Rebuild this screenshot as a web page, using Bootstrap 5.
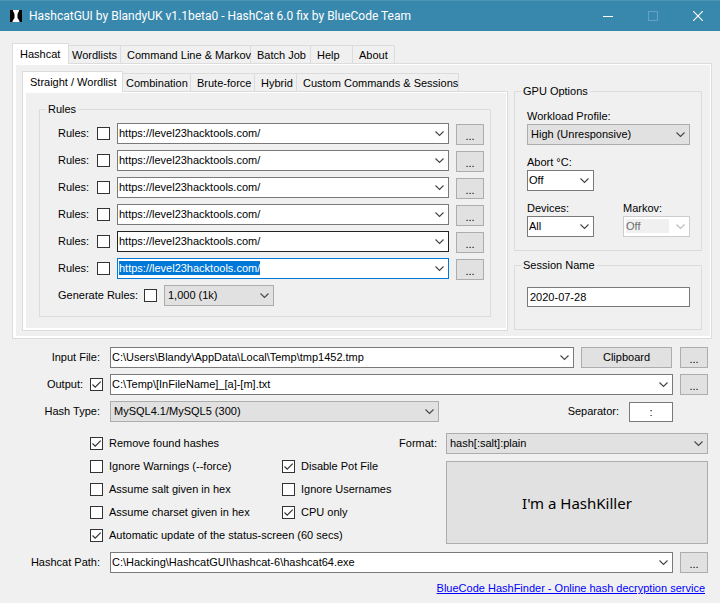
<!DOCTYPE html>
<html lang="en">
<head>
<meta charset="utf-8">
<meta name="viewport" content="width=device-width, initial-scale=1">
<title>HashcatGUI</title>
<link href="https://cdn.jsdelivr.net/npm/bootstrap@5.3.0/dist/css/bootstrap.min.css" rel="stylesheet">
<style>
:root { --face: #f0f0f0; --line: #dcdcdc; --btn: #e1e1e1; --btn-line: #adadad; --box-line: #7a7a7a; }
body { background: var(--face); color: #000; font: 11px/15px "Liberation Sans", Arial, sans-serif; }
.titlebar { background: #3888ad; color: #fff; height: 31px; padding-left: 9px; border-top: 1px solid #4a94b5; font: 12px/16px Roboto, sans-serif; }
.titlebar span { margin-left: 6px; }
.titlebar button { width: 45px; height: 30px; border: 0; background: none; color: #fff; padding: 0; display: flex; align-items: center; justify-content: center; }
.titlebar button:disabled { color: #66a6c4; }
.workspace { padding: 12px 8px 0 12px; }
.lower { padding: 8px 12px 0 22px; }
.tabs .nav-link { color: #000; background: var(--face); border: 1px solid var(--line); border-left: 0; border-bottom: 0; border-radius: 0; height: 18px; padding: 0 0 0 3px; line-height: 19px; text-align: left; white-space: nowrap; margin: 0; }
.tabs .nav-link.active { background: #fff; border: 1px solid var(--line); border-bottom: 0; height: 21px; padding-left: 7px; line-height: 18px; margin-bottom: -1px; position: relative; color: #000; }
.tabs .nav-link.pad-l { padding-left: 6px; }
.w-a { width: 42px; } .w-b { width: 52px; } .w-c { width: 57px; } .w-d { width: 60px; } .w-e { width: 64px; } .w-f { width: 68px; } .w-g { width: 101px; } .w-h { width: 130px; } .w-i { width: 162px; }
.sheet { background: #fff; border: 1px solid var(--line); padding: 1px 1px 2px 3px; }
.sheet-body { background: var(--face); }
.outer-body { padding: 6px 8px 5px 6px; gap: 6px; }
.inner-body { padding: 9px 15px 11px 13px; }
.side { width: 188px; padding-top: 13px; gap: 7px; }
.group { border: 1px solid var(--line); }
.group > legend { float: none; width: auto; font-size: 11px; line-height: 15px; margin: 0 0 0 6px; padding: 0 2px; }
.rules-box { padding: 6px 6px 10px 18px; }
.gpu-box { padding: 10px 11px 13px 12px; }
.session-box { padding: 14px 11px 22px 12px; }
.stack { display: flex; flex-direction: column; gap: 6px; }
.rule { display: flex; align-items: center; gap: 7px; }
.rule > label { width: 31px; margin-right: 1px; white-space: nowrap; }
.rule > .long { width: 78px; }
.combo { display: flex; height: 21px; background: #fff; border: 1px solid var(--box-line); min-width: 0; }
.combo input { flex: 1; min-width: 0; width: 0; border: 0; padding: 0 0 0 1px; margin: 2px 0 3px; line-height: 14px; background: none; outline: 0; color: #000; }
.combo button { width: 17px; border: 0; padding: 0; background: none; display: flex; align-items: center; justify-content: center; color: #444; }
.combo.dark { border-color: #222; }
.combo.focus { border-color: #0078d7; }
.combo.off { border-color: #ccc; }
.combo.off input { color: #6d6d6d; background: var(--face); margin-left: 2px; margin-right: 3px; padding: 0; }
.combo.off button { color: #bbb; }
.combo input::selection { background: #0078d7; color: #fff; }
.narrow { width: 67px; }
.abort { margin-top: 10px; }
.pick, .field, .push { height: 21px; border: 1px solid var(--btn-line); border-radius: 0; font: inherit; color: #000; }
.pick { appearance: none; min-width: 0; padding: 0 18px 0 3px; background: var(--btn) url("data:image/svg+xml,%3Csvg xmlns='http://www.w3.org/2000/svg' width='9' height='6'%3E%3Cpath d='M.5.5l4 4 4-4' fill='none' stroke='%23444' stroke-width='1.1'/%3E%3C/svg%3E") no-repeat right 4px center; }
.count { width: 110px; }
.field { height: 20px; background: #fff; border-color: var(--box-line); padding: 0 2px; min-width: 0; }
.push { background: var(--btn); padding: 0; }
.more { width: 28px; flex: none; line-height: 23px; }
.rule .more { margin-bottom: -2px; }
.tick { appearance: none; flex: none; width: 13px; height: 13px; margin: 0; border: 1px solid #333; background: #fff center no-repeat; }
.tick:checked { background-image: url("data:image/svg+xml,%3Csvg xmlns='http://www.w3.org/2000/svg' width='11' height='11'%3E%3Cpath d='M1.500 5.500l2.700 2.700L9.700 2.700' fill='none' stroke='%23333' stroke-width='1.200'/%3E%3C/svg%3E"); }
.line { display: flex; align-items: center; gap: 7px; }
.cap { width: 78px; flex: none; text-align: right; margin-right: 3px; }
.cap-short { width: 61px; flex: none; text-align: right; }
.options { display: grid; grid-template-columns: 192px 1fr; grid-auto-rows: 23px; align-items: center; padding-left: 68px; }
.options label { display: flex; align-items: center; gap: 6px; white-space: nowrap; }
.options .wide { grid-column: 1 / -1; }
.action { width: 262px; gap: 7px; padding: 1px 0 3px; }
.format-row { margin-left: -60px; gap: 9px; }
.format-row label { width: 51px; text-align: right; }
.go { font: 15px/20px "Noto Sans", sans-serif; }
.mid { margin: 10px 0 5px; }
.clip { width: 91px; margin-right: 1px; }
.hash { width: 329px; }
.sep { width: 44px; margin: 0 35px 0 3px; text-align: center; }
.home { color: #00f; text-decoration: underline; margin: 8px 3px 0 0; }
</style>
<script src="https://cdn.jsdelivr.net/npm/bootstrap@5.3.0/dist/js/bootstrap.bundle.min.js" defer></script>
</head>
<body>
<svg class="d-none"><symbol id="chev" viewBox="0 0 9 6"><path d="M.5.5l4 4 4-4" fill="none" stroke="currentColor" stroke-width="1.1"/></symbol></svg>
<header class="titlebar d-flex align-items-center">
  <svg width="14" height="14" viewBox="0 0 14 14" aria-hidden="true"><path d="M1 1h12v12H1z" fill="#000"/><path d="M4 1h6v1L8.500 5v4l2 3v1h-7v-1l2-3V5L4 2z" fill="#fff"/></svg>
  <span class="flex-grow-1 text-nowrap">HashcatGUI by BlandyUK v1.1beta0 - HashCat 6.0 fix by BlueCode Team</span>
  <button aria-label="Minimize"><svg width="10" height="10"><path d="M0 5.500h10" stroke="currentColor"/></svg></button>
  <button aria-label="Maximize" disabled><svg width="10" height="10"><path d="M.5.5h9v9h-9z" stroke="currentColor" fill="none"/></svg></button>
  <button aria-label="Close"><svg width="10" height="10"><path d="M0 0l10 10M10 0L0 10" stroke="currentColor" stroke-width="1.200"/></svg></button>
</header>

<main>
<div class="workspace">
  <nav class="tabs d-flex align-items-end">
    <button class="nav-link active w-c">Hashcat</button><button class="nav-link w-b">Wordlists</button><button class="nav-link pad-l w-h">Command Line &amp; Markov</button><button class="nav-link pad-l w-d">Batch Job</button><button class="nav-link pad-l w-a">Help</button><button class="nav-link pad-l w-a">About</button>
  </nav>
  <div class="sheet"><div class="sheet-body outer-body d-flex">
    <section class="flex-grow-1">
      <nav class="tabs d-flex align-items-end">
        <button class="nav-link active w-g">Straight / Wordlist</button><button class="nav-link w-f">Combination</button><button class="nav-link pad-l w-e">Brute-force</button><button class="nav-link pad-l w-a">Hybrid</button><button class="nav-link pad-l w-i">Custom Commands &amp; Sessions</button>
      </nav>
      <div class="sheet"><div class="sheet-body inner-body">
        <fieldset class="group"><legend>Rules</legend>
          <div class="stack rules-box">
            <div class="rule"><label for="r1">Rules:</label><input class="tick" type="checkbox" id="r1"><div class="combo flex-grow-1"><input value="https://level23hacktools.com/" aria-label="Rule 1"><button aria-label="Open"><svg width="9" height="6"><use href="#chev"/></svg></button></div><button class="push more">...</button></div>
            <div class="rule"><label for="r2">Rules:</label><input class="tick" type="checkbox" id="r2"><div class="combo flex-grow-1"><input value="https://level23hacktools.com/" aria-label="Rule 2"><button aria-label="Open"><svg width="9" height="6"><use href="#chev"/></svg></button></div><button class="push more">...</button></div>
            <div class="rule"><label for="r3">Rules:</label><input class="tick" type="checkbox" id="r3"><div class="combo flex-grow-1"><input value="https://level23hacktools.com/" aria-label="Rule 3"><button aria-label="Open"><svg width="9" height="6"><use href="#chev"/></svg></button></div><button class="push more">...</button></div>
            <div class="rule"><label for="r4">Rules:</label><input class="tick" type="checkbox" id="r4"><div class="combo flex-grow-1"><input value="https://level23hacktools.com/" aria-label="Rule 4"><button aria-label="Open"><svg width="9" height="6"><use href="#chev"/></svg></button></div><button class="push more">...</button></div>
            <div class="rule"><label for="r5">Rules:</label><input class="tick" type="checkbox" id="r5"><div class="combo dark flex-grow-1"><input value="https://level23hacktools.com/" aria-label="Rule 5"><button aria-label="Open"><svg width="9" height="6"><use href="#chev"/></svg></button></div><button class="push more">...</button></div>
            <div class="rule"><label for="r6">Rules:</label><input class="tick" type="checkbox" id="r6"><div class="combo focus flex-grow-1"><input id="active-rule" value="https://level23hacktools.com/" aria-label="Rule 6"><button aria-label="Open"><svg width="9" height="6"><use href="#chev"/></svg></button></div><button class="push more">...</button></div>
            <div class="rule"><label class="long" for="gen">Generate Rules:</label><input class="tick" type="checkbox" id="gen"><select class="pick count" aria-label="Rule count"><option>1,000 (1k)</option></select></div>
          </div>
        </fieldset>
      </div></div>
    </section>
    <aside class="side d-flex flex-column flex-shrink-0">
      <fieldset class="group"><legend>GPU Options</legend>
        <div class="gpu-box d-flex flex-column">
          <label for="wp">Workload Profile:</label>
          <select class="pick w-100" id="wp"><option>High (Unresponsive)</option></select>
          <label class="abort" for="abort">Abort °C:</label>
          <div class="combo narrow"><input id="abort" value="Off"><button aria-label="Open"><svg width="9" height="6"><use href="#chev"/></svg></button></div>
          <div class="d-flex justify-content-between abort">
            <div><label class="d-block" for="dev">Devices:</label><div class="combo narrow"><input id="dev" value="All"><button aria-label="Open"><svg width="9" height="6"><use href="#chev"/></svg></button></div></div>
            <div><label class="d-block" for="mk">Markov:</label><div class="combo off narrow"><input id="mk" value="Off" disabled><button aria-label="Open" disabled><svg width="9" height="6"><use href="#chev"/></svg></button></div></div>
          </div>
        </div>
      </fieldset>
      <fieldset class="group"><legend>Session Name</legend>
        <div class="session-box d-flex"><input class="field w-100" value="2020-07-28" aria-label="Session Name"></div>
      </fieldset>
    </aside>
  </div></div>
</div>

<div class="lower">
  <div class="stack">
    <div class="line"><label class="cap" for="in">Input File:</label><div class="combo flex-grow-1"><input id="in" value="C:\Users\Blandy\AppData\Local\Temp\tmp1452.tmp"><button aria-label="Open"><svg width="9" height="6"><use href="#chev"/></svg></button></div><button class="push clip">Clipboard</button><button class="push more">...</button></div>
    <div class="line"><label class="cap-short" for="out">Output:</label><input class="tick" type="checkbox" checked aria-label="Write output"><div class="combo flex-grow-1"><input id="out" value="C:\Temp\[InFileName]_[a]-[m].txt"><button aria-label="Open"><svg width="9" height="6"><use href="#chev"/></svg></button></div><button class="push more">...</button></div>
    <div class="line"><label class="cap" for="ht">Hash Type:</label><select class="pick hash" id="ht"><option>MySQL4.1/MySQL5 (300)</option></select><label class="ms-auto" for="sep">Separator:</label><input class="field sep" id="sep" value=":"></div>
  </div>
  <div class="mid d-flex justify-content-between">
    <div class="options">
      <label class="wide"><input class="tick" type="checkbox" checked>Remove found hashes</label>
      <label><input class="tick" type="checkbox">Ignore Warnings (--force)</label>
      <label><input class="tick" type="checkbox" checked>Disable Pot File</label>
      <label><input class="tick" type="checkbox">Assume salt given in hex</label>
      <label><input class="tick" type="checkbox">Ignore Usernames</label>
      <label><input class="tick" type="checkbox">Assume charset given in hex</label>
      <label><input class="tick" type="checkbox" checked>CPU only</label>
      <label class="wide"><input class="tick" type="checkbox" checked>Automatic update of the status-screen (60 secs)</label>
    </div>
    <div class="action d-flex flex-column">
      <div class="format-row d-flex align-items-center"><label for="fmt">Format:</label><select class="pick flex-grow-1" id="fmt"><option>hash[:salt]:plain</option></select></div>
      <button class="push go flex-grow-1">I'm a HashKiller</button>
    </div>
  </div>
  <div class="line"><label class="cap" for="path">Hashcat Path:</label><div class="combo flex-grow-1"><input id="path" value="C:\Hacking\HashcatGUI\hashcat-6\hashcat64.exe"><button aria-label="Open"><svg width="9" height="6"><use href="#chev"/></svg></button></div><button class="push more">...</button></div>
  <div class="d-flex justify-content-end"><a class="home" href="#">BlueCode HashFinder - Online hash decryption service</a></div>
</div>
</main>
<script>document.getElementById("active-rule").select();</script>
</body>
</html>
